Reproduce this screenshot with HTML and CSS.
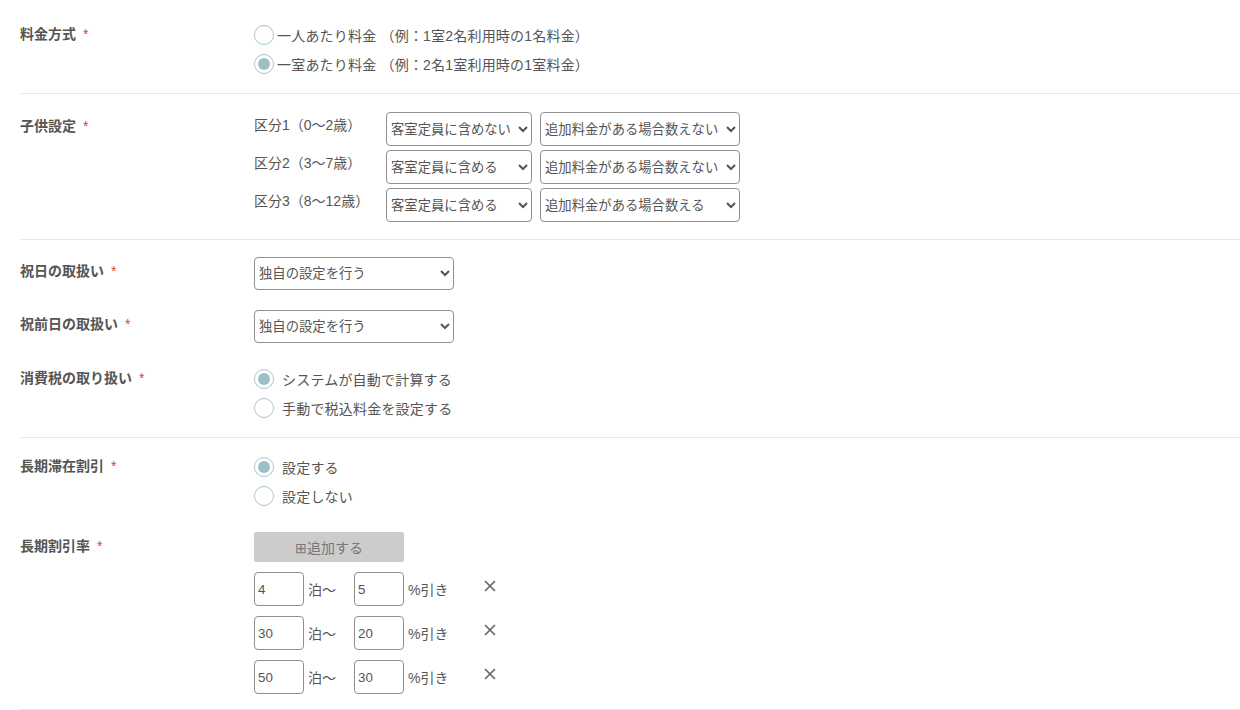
FILE: index.html
```html
<!DOCTYPE html>
<html lang="ja">
<head>
  <meta charset="UTF-8">
  <meta name="viewport" content="width=device-width, initial-scale=1.0">
  <title>料金設定</title>
  <link rel="stylesheet" href="styles.css">
</head>
<body>

<div class="form">

  <section class="sec sec-price">
    <div class="row">
      <div class="label">料金方式<span class="req">*</span></div>
      <div class="field radios">
        <label class="radio tight"><input type="radio" name="price">一人あたり料金 （例：1室2名利用時の1名料金）</label>
        <label class="radio tight"><input type="radio" name="price" checked>一室あたり料金 （例：2名1室利用時の1室料金）</label>
      </div>
    </div>
  </section>

  <section class="sec sec-child">
    <div class="row">
      <div class="label">子供設定<span class="req">*</span></div>
      <div class="field child-grid">
        <span class="child-label">区分1（0〜2歳）</span>
        <select class="sel sel-s"><option>客室定員に含めない</option></select>
        <select class="sel sel-l"><option>追加料金がある場合数えない</option></select>

        <span class="child-label">区分2（3〜7歳）</span>
        <select class="sel sel-s"><option>客室定員に含める</option></select>
        <select class="sel sel-l"><option>追加料金がある場合数えない</option></select>

        <span class="child-label">区分3（8〜12歳）</span>
        <select class="sel sel-s"><option>客室定員に含める</option></select>
        <select class="sel sel-l"><option>追加料金がある場合数える</option></select>
      </div>
    </div>
  </section>

  <section class="sec sec-holiday">
    <div class="row">
      <div class="label">祝日の取扱い<span class="req">*</span></div>
      <div class="field">
        <select class="sel sel-l"><option>独自の設定を行う</option></select>
      </div>
    </div>
    <div class="row row-next">
      <div class="label">祝前日の取扱い<span class="req">*</span></div>
      <div class="field">
        <select class="sel sel-l"><option>独自の設定を行う</option></select>
      </div>
    </div>
    <div class="row row-radio">
      <div class="label">消費税の取り扱い<span class="req">*</span></div>
      <div class="field radios">
        <label class="radio"><input type="radio" name="tax" checked>システムが自動で計算する</label>
        <label class="radio"><input type="radio" name="tax">手動で税込料金を設定する</label>
      </div>
    </div>
  </section>

  <section class="sec sec-stay">
    <div class="row">
      <div class="label">長期滞在割引<span class="req">*</span></div>
      <div class="field radios">
        <label class="radio"><input type="radio" name="stay" checked>設定する</label>
        <label class="radio"><input type="radio" name="stay">設定しない</label>
      </div>
    </div>
    <div class="row row-rate">
      <div class="label">長期割引率<span class="req">*</span></div>
      <div class="field rates">
        <button class="add-btn" type="button">⊞追加する</button>

        <div class="rate-row">
          <input class="num" type="text" value="4">
          <span class="unit">泊〜</span>
          <input class="num" type="text" value="5">
          <span class="unit unit-pct">%引き</span>
          <span class="del"><svg width="12" height="12" viewBox="0 0 12 12"><path d="M1 1L11 11M11 1L1 11" stroke="#666" stroke-width="1.7" fill="none"/></svg></span>
        </div>
        <div class="rate-row">
          <input class="num" type="text" value="30">
          <span class="unit">泊〜</span>
          <input class="num" type="text" value="20">
          <span class="unit unit-pct">%引き</span>
          <span class="del"><svg width="12" height="12" viewBox="0 0 12 12"><path d="M1 1L11 11M11 1L1 11" stroke="#666" stroke-width="1.7" fill="none"/></svg></span>
        </div>
        <div class="rate-row">
          <input class="num" type="text" value="50">
          <span class="unit">泊〜</span>
          <input class="num" type="text" value="30">
          <span class="unit unit-pct">%引き</span>
          <span class="del"><svg width="12" height="12" viewBox="0 0 12 12"><path d="M1 1L11 11M11 1L1 11" stroke="#666" stroke-width="1.7" fill="none"/></svg></span>
        </div>
      </div>
    </div>
  </section>

</div>

</body>
</html>
```

FILE: styles.css
```css
body {
  margin: 0;
  padding: 0 0 0 20px;
  font-family: "Liberation Sans", Arial, "Noto Sans CJK JP", sans-serif;
  font-size: 14px;
  color: #555;
  background-color: #fff;
}
.sec {
  border-bottom: 1px solid #e5e7ea;
}
.sec-price {
  padding: 20px 0 15px;
}
.sec-child {
  padding: 18px 0 17px;
}
.sec-holiday {
  padding: 17px 0 15px;
}
.sec-stay {
  padding: 14px 0 15px;
}
.row {
  display: flex;
  align-items: flex-start;
}
.row-next {
  margin-top: 20px;
}
.row-radio {
  margin-top: 21px;
}
.row-rate {
  margin-top: 22px;
}
.label {
  width: 234px;
  flex-shrink: 0;
  font-weight: bold;
  line-height: 28px;
  color: #555;
}
.req {
  color: #e2412f;
  font-weight: normal;
  margin-left: 7px;
}
.radios {
  display: flex;
  flex-direction: column;
}
.radio {
  display: flex;
  align-items: center;
  height: 29px;
  gap: 8px;
  color: #555;
  letter-spacing: 0.2px;
}
.radio.tight {
  gap: 3px;
}
.radio input {
  appearance: none;
  -webkit-appearance: none;
  margin: 0;
  width: 20px;
  height: 20px;
  border: 1px solid #a6c6cd;
  border-radius: 50%;
  background: #fff;
  position: relative;
}
.radio input:checked::after {
  content: "";
  position: absolute;
  left: 3px;
  top: 3px;
  width: 12px;
  height: 12px;
  border-radius: 50%;
  background: #9dbfc6;
}
.child-grid {
  display: grid;
  grid-template-columns: 124px 146px 200px;
  column-gap: 8px;
  row-gap: 4px;
}
.child-label {
  line-height: 26px;
  font-size: 14px;
}
.sel {
  height: 34px;
  font-family: "Liberation Sans", Arial, "Noto Sans CJK JP", sans-serif;
  font-size: 13.33px;
  color: #555;
  border: 1px solid #8f8f8f;
  border-radius: 4px;
  background-color: #fff;
  padding: 0;
}
.sel-s {
  width: 146px;
}
.sel-l {
  width: 200px;
}
.sec-holiday .sel {
  height: 33px;
}
.rates {
  display: flex;
  flex-direction: column;
  gap: 10px;
}
.add-btn {
  width: 150px;
  height: 30px;
  border: none;
  border-radius: 2px;
  background: #cccccc;
  color: #777;
  font-family: "Liberation Sans", Arial, "Noto Sans CJK JP", sans-serif;
  font-size: 14px;
  padding: 0;
}
.rate-row {
  display: flex;
  align-items: center;
  height: 34px;
}
.num {
  box-sizing: border-box;
  width: 50px;
  height: 34px;
  border: 1px solid #8f8f8f;
  border-radius: 4px;
  padding: 0 3px;
  font-family: "Liberation Sans", Arial, "Noto Sans CJK JP", sans-serif;
  font-size: 13.33px;
  color: #555;
}
.unit {
  width: 50px;
  padding-left: 4px;
  box-sizing: border-box;
}
.unit-pct {
  width: 80px;
}
.del {
  display: flex;
  align-items: center;
  margin-left: 0;
  margin-top: -6px;
}
```
